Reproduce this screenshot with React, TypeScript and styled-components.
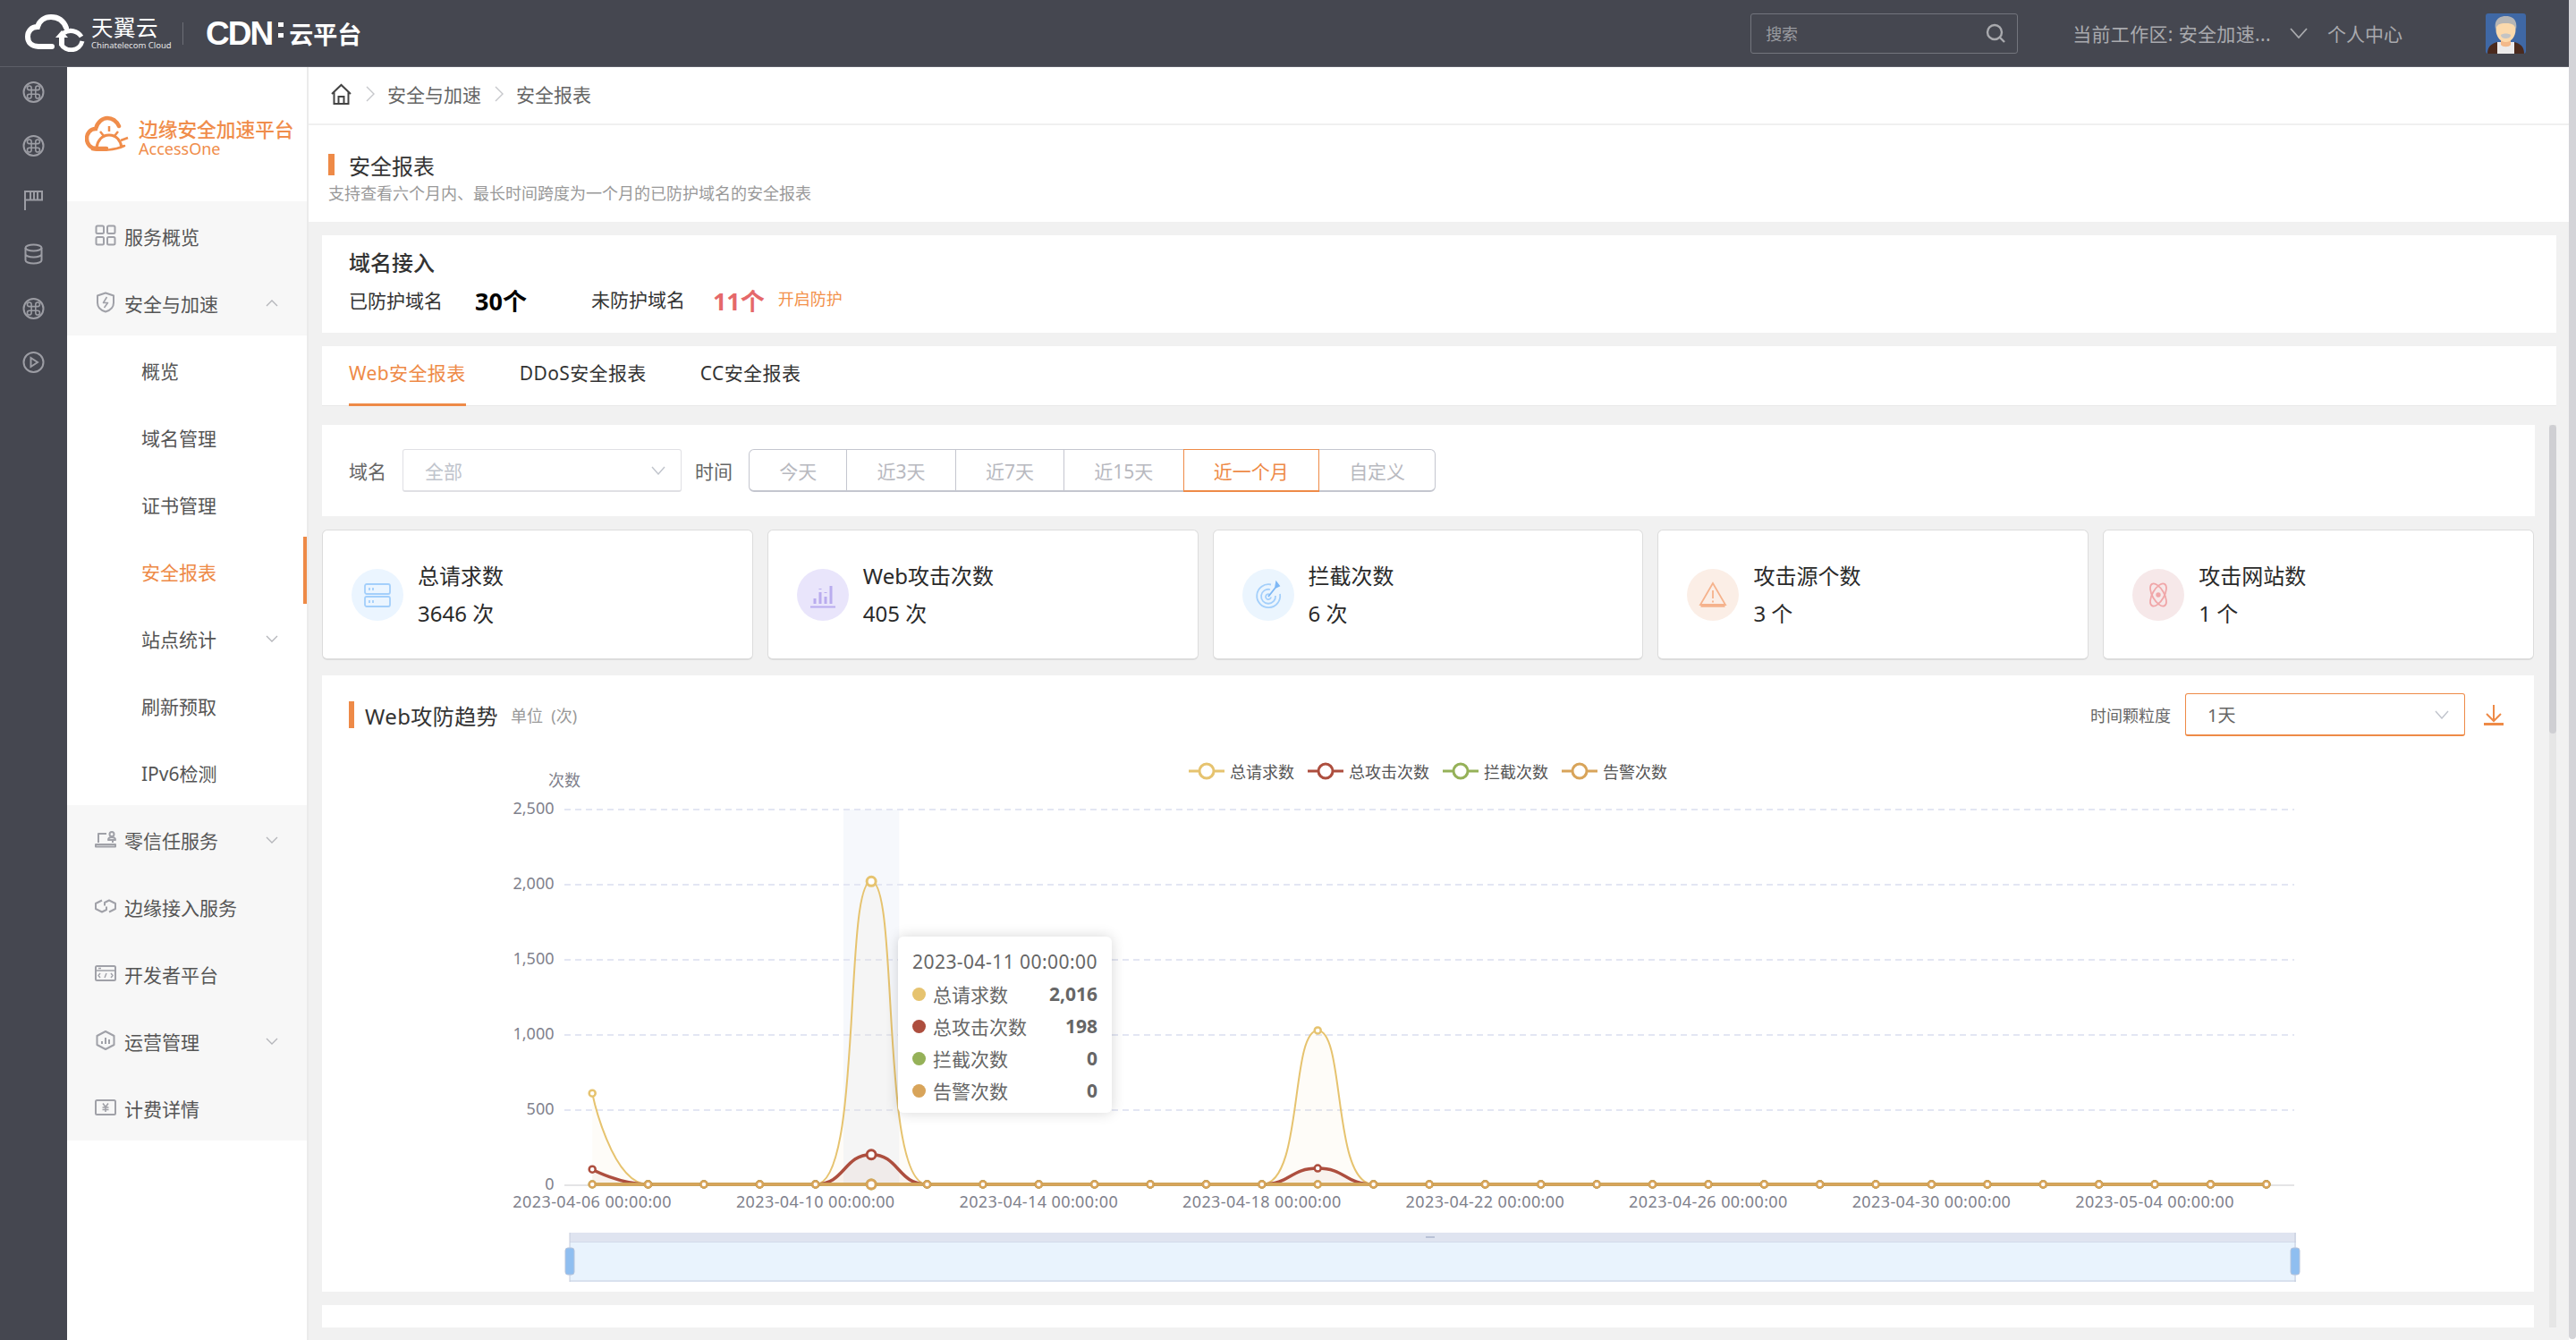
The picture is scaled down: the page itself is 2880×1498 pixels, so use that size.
import React from 'react';
import styled, { createGlobalStyle } from 'styled-components';

const GlobalStyle = createGlobalStyle`
  html, body {
    margin: 0;
    padding: 0;
    width: 2880px;
    height: 1498px;
    overflow: hidden;
    background: #fff;
    font-family: "Noto Sans", "Noto Sans CJK SC", sans-serif;
  }
  * { box-sizing: border-box; }
`;

const ORANGE = '#ee8a47';

// ---- page frame ----
const Shell = styled.div`
  display: flex;
  width: 2880px;
  height: 1498px;
  overflow: hidden;
`;

const Page = styled.div`
  flex: 1;
  min-width: 0;
  display: flex;
  flex-direction: column;
`;

const PageScrollbar = styled.div`
  width: 8px;
  height: 1497px;
  background: #d4d4d8;
  border-radius: 0 0 4px 4px;
`;

const Body = styled.div`
  flex: 1;
  min-height: 0;
  display: flex;
`;

// ---- top bar ----
const TopBar = styled.header`
  height: 75px;
  flex: none;
  display: flex;
  align-items: center;
  background: #454750;
  border-bottom: 1px solid #5c5e67;
  color: #a9aaae;
`;

const BrandCloud = styled.svg`
  width: 68px;
  height: 42px;
  margin-left: 28px;
  flex: none;
`;

const BrandText = styled.div`
  width: 76px;
  margin-left: 6px;
  display: flex;
  flex-direction: column;
  color: #fff;
`;

const BrandCn = styled.span`
  font-size: 24.5px;
  line-height: 28px;
  letter-spacing: 0.5px;
  white-space: nowrap;
`;

const BrandEn = styled.span`
  font-size: 9.5px;
  line-height: 12px;
  white-space: nowrap;
  color: #e4e4e6;
`;

const BrandDivider = styled.div`
  width: 1px;
  height: 25px;
  margin: 0 25px 0 26px;
  background: #6c6e76;
`;

const CdnMark = styled.span`
  font-family: "Liberation Sans", sans-serif;
  font-size: 37px;
  font-weight: 700;
  color: #fff;
  letter-spacing: -2px;
  line-height: 1;
`;

const CdnDots = styled.span`
  width: 6px;
  height: 17px;
  margin: 0 6px 8px 7px;
  border-top: 5px solid #fff;
  border-bottom: 5px solid #fff;
`;

const CdnName = styled.span`
  font-size: 27px;
  font-weight: 700;
  color: #fff;
`;

const SearchBox = styled.div`
  width: 299px;
  height: 45px;
  margin-left: auto;
  padding: 0 12px 0 16px;
  display: flex;
  align-items: center;
  justify-content: space-between;
  border: 1px solid #73757d;
  border-radius: 3px;
  font-size: 18px;
  color: #9a9ba0;
`;

const WorkspaceText = styled.span`
  margin-left: 61px;
  font-size: 21px;
  letter-spacing: 0.35px;
  white-space: nowrap;
`;

const WorkspaceChevron = styled.svg`
  width: 20px;
  height: 12px;
  margin-left: 21px;
  fill: none;
  stroke: #a9aaae;
  stroke-width: 1.8;
`;

const PersonalLink = styled.span`
  margin-left: 22px;
  font-size: 21px;
`;

const Avatar = styled.svg`
  width: 45px;
  height: 45px;
  margin: 0 48px 0 93px;
  flex: none;
  border-radius: 3px;
`;

// ---- left rail ----
const Rail = styled.nav`
  width: 75px;
  flex: none;
  padding-top: 16px;
  display: flex;
  flex-direction: column;
  align-items: center;
  gap: 36.4px;
  background: #454750;
  color: #9c9da4;
`;

const RailIcon = styled.svg`
  width: 25px;
  height: 24px;
  display: block;
  fill: none;
  stroke: currentColor;
  stroke-width: 2;
`;

// ---- sidebar ----
const Sidebar = styled.aside`
  width: 270px;
  flex: none;
  border-right: 2px solid #ebebeb;
  background: #fff;
`;

const SideLogo = styled.div`
  height: 150px;
  padding: 54px 0 0 20px;
  display: flex;
  gap: 7px;
`;

const SideLogoMark = styled.svg`
  width: 53px;
  height: 40px;
  flex: none;
`;

const SideLogoText = styled.div`
  display: flex;
  flex-direction: column;
  color: #f08d4b;
`;

const SideLogoName = styled.span`
  font-size: 21.7px;
  line-height: 30px;
  font-weight: 500;
  white-space: nowrap;
  margin-top: 1px;
`;

const SideLogoEn = styled.span`
  font-size: 18px;
  line-height: 20px;
  margin-top: -4px;
`;

const MenuRow = styled.div<{ $sub?: boolean; $active?: boolean }>`
  height: 75px;
  display: flex;
  align-items: center;
  gap: 9px;
  padding-left: ${p => (p.$sub ? '83px' : '31px')};
  font-size: 21px;
  color: ${p => (p.$active ? ORANGE : '#555')};
  background: ${p => (p.$sub ? '#fff' : '#f7f7f7')};
  border-right: ${p => (p.$active ? `4px solid ${ORANGE}` : 'none')};
`;

const MenuLabel = styled.span`
  position: relative;
  top: 1px;
`;

const MenuIcon = styled.svg`
  width: 24px;
  height: 24px;
  flex: none;
  fill: none;
  stroke: #a0a1a8;
  stroke-width: 2;
  stroke-linejoin: round;
`;

const MenuChevron = styled.svg`
  width: 14px;
  height: 8px;
  margin: 2px 32px 0 auto;
  flex: none;
  fill: none;
  stroke: #b4b5ba;
  stroke-width: 1.3;
`;

// ---- main column ----
const Main = styled.main`
  flex: 1;
  min-width: 0;
  display: flex;
  flex-direction: column;
  background: #f1f1f1;
`;

const Breadcrumb = styled.div`
  height: 65px;
  flex: none;
  padding: 0 0 3px 24px;
  display: flex;
  align-items: center;
  background: #fff;
  border-bottom: 2px solid #f0f0f0;
  font-size: 21px;
  color: #666;
`;

const CrumbSep = styled.svg`
  width: 10px;
  height: 18px;
  margin: 0 14px 0 15px;
  fill: none;
  stroke: #c6c7cb;
  stroke-width: 1.4;
`;

const TitleBlock = styled.div`
  height: 108px;
  flex: none;
  padding: 29px 0 0 22px;
  background: #fff;
`;

const TitleRow = styled.div`
  display: flex;
  align-items: center;
  gap: 16px;
  height: 30px;
  font-size: 24px;
  color: #333;
`;

const AccentBar = styled.span<{ $w: number; $h: number }>`
  width: ${p => p.$w}px;
  height: ${p => p.$h}px;
  flex: none;
  background: ${ORANGE};
`;

const TitleDesc = styled.div`
  margin-top: 3px;
  font-size: 18px;
  line-height: 28px;
  color: #999;
`;

const Content = styled.div`
  flex: 1;
  min-height: 0;
  padding: 15px 14px 14px 15px;
  display: flex;
  flex-direction: column;
`;

const DomainCard = styled.section`
  height: 109px;
  flex: none;
  padding: 14px 30px 0;
  background: #fff;
`;

const DomainTitle = styled.div`
  font-size: 24px;
  line-height: 34px;
  font-weight: 500;
  color: #333;
`;

const DomainRow = styled.div`
  height: 48px;
  display: flex;
  align-items: center;
  font-size: 21px;
  color: #333;
`;

const DomainCount = styled.span<{ $gap: number; $red?: boolean }>`
  margin-left: ${p => p.$gap}px;
  font-size: 27px;
  font-weight: 700;
  color: ${p => (p.$red ? '#e5686a' : '#000')};
`;

const DomainLabel = styled.span<{ $gap?: number; $raised?: boolean }>`
  margin-left: ${p => p.$gap || 0}px;
  margin-bottom: ${p => (p.$raised ? 3 : 0)}px;
`;

const EnableLink = styled.span`
  margin: 0 0 4px 15px;
  font-size: 18px;
  color: #f3914a;
`;

const TabsCard = styled.section`
  height: 67px;
  flex: none;
  margin-top: 15px;
  padding-left: 30px;
  display: flex;
  gap: 60px;
  background: #fff;
  border-bottom: 1px solid #e8e8e8;
`;

const Tab = styled.div<{ $active?: boolean }>`
  height: 67px;
  display: flex;
  align-items: center;
  padding-bottom: 6px;
  font-size: 21px;
  letter-spacing: 0.4px;
  color: ${p => (p.$active ? ORANGE : '#333')};
  border-bottom: 3px solid ${p => (p.$active ? ORANGE : 'transparent')};
`;

const ScrollPane = styled.div`
  flex: 1;
  min-height: 0;
  margin-top: 21px;
  display: flex;
  gap: 16px;
`;

const ScrollBody = styled.div`
  flex: 1;
  min-width: 0;
  overflow: hidden;
`;

const ScrollTrack = styled.div`
  width: 8px;
  flex: none;
  background: #e6e6e6;
`;

const ScrollThumb = styled.div`
  height: 345px;
  background: #cfcfd3;
  border-radius: 4px;
`;

const FilterCard = styled.section`
  height: 102px;
  padding: 0 30px;
  display: flex;
  align-items: center;
  background: #fff;
  font-size: 21px;
  color: #666;
`;

const FilterSelect = styled.div<{ $focus?: boolean; $w: number }>`
  width: ${p => p.$w}px;
  height: 48px;
  flex: none;
  display: flex;
  align-items: center;
  justify-content: space-between;
  padding: 0 17px 0 24px;
  border: 1px solid ${p => (p.$focus ? ORANGE : '#e0e0e4')};
  border-bottom-width: 2px;
  border-radius: 3px;
  color: ${p => (p.$focus ? '#666' : '#c0c4cc')};
  background: #fff;
`;

const DomainSelect = styled(FilterSelect)`
  margin: 0 15px 0 18px;
`;

const SelectChevron = styled.svg`
  width: 16px;
  height: 10px;
  fill: none;
  stroke: #c0c4cc;
  stroke-width: 1.4;
`;

const RangeGroup = styled.div`
  margin-left: 19px;
  display: flex;
`;

const RangeButton = styled.div<{ $active?: boolean }>`
  position: relative;
  z-index: ${p => (p.$active ? 1 : 0)};
  height: 48px;
  margin-left: -1px;
  padding: 0 33.2px;
  display: flex;
  align-items: center;
  border: 1px solid ${p => (p.$active ? ORANGE : '#c4c6cf')};
  border-bottom-width: 2px;
  color: ${p => (p.$active ? ORANGE : '#b8b9bf')};
  background: #fff;
  &:first-child { border-radius: 6px 0 0 6px; }
  &:last-child { border-radius: 0 6px 6px 0; }
`;

const StatRow = styled.div`
  margin: 15px 1px 0 0;
  display: grid;
  grid-template-columns: repeat(5, 1fr);
  gap: 16px;
`;

const StatCard = styled.div`
  height: 146px;
  padding: 1px 0 0 32px;
  display: flex;
  align-items: center;
  gap: 16px;
  background: #fff;
  border: 1px solid #dcdcdc;
  border-bottom-width: 2px;
  border-radius: 6px;
`;

const StatBadge = styled.div<{ $bg: string }>`
  width: 58px;
  height: 58px;
  flex: none;
  border-radius: 50%;
  display: flex;
  align-items: center;
  justify-content: center;
  background: ${p => p.$bg};
`;

const StatIcon = styled.svg`
  width: 32px;
  height: 32px;
  fill: none;
  stroke-width: 1.8;
`;

const StatText = styled.div`
  display: flex;
  flex-direction: column;
  font-size: 24px;
  line-height: 42px;
  color: #2a2a2a;
`;

// ---- chart ----
const ChartCard = styled.section`
  height: 689px;
  margin: 17px 1px 0 0;
  background: #fff;
`;

const ChartHeader = styled.div`
  height: 90px;
  padding: 20px 34px 22px 30px;
  display: flex;
  align-items: center;
`;

const ChartTitle = styled.span`
  margin-left: 12px;
  font-size: 24px;
  letter-spacing: 0.4px;
  color: #333;
`;

const ChartUnit = styled.span`
  margin-left: 14px;
  font-size: 18px;
  color: #999;
  white-space: pre;
`;

const GrainLabel = styled.span`
  margin: 0 16px 0 auto;
  font-size: 18px;
  color: #666;
`;

const GrainSelect = styled(FilterSelect)`
  font-size: 20px;
`;

const DownloadIcon = styled.svg`
  width: 22px;
  height: 24px;
  margin-left: 21px;
  flex: none;
  fill: none;
  stroke: ${ORANGE};
  stroke-width: 2;
`;

const ChartBody = styled.div`
  position: relative;
  height: 595px;
`;

const ChartSvg = styled.svg`
  display: block;
  width: 2474px;
  height: 595px;
  font-family: "Noto Sans", "Noto Sans CJK SC", sans-serif;
`;

const Legend = styled.div`
  position: absolute;
  top: -1px;
  left: 0;
  right: 0;
  height: 36px;
  display: flex;
  justify-content: center;
  align-items: center;
  gap: 15px;
  font-size: 18px;
  color: #555;
`;

const LegendItem = styled.div`
  display: flex;
  align-items: center;
  gap: 6px;
`;

const LegendMark = styled.svg`
  width: 40px;
  height: 20px;
`;

const Tooltip = styled.div`
  position: absolute;
  left: 644px;
  top: 202px;
  width: 239px;
  height: 197px;
  padding: 10px 16px;
  background: #fff;
  border-radius: 6px;
  box-shadow: 0 0 15px rgba(0, 0, 0, 0.16);
  font-size: 21px;
  color: #666;
`;

const TooltipDate = styled.div`
  height: 36px;
  line-height: 36px;
  white-space: nowrap;
  letter-spacing: 0.45px;
`;

const TooltipRow = styled.div`
  height: 36px;
  display: flex;
  align-items: center;
`;

const TooltipDot = styled.span<{ $color: string }>`
  width: 15px;
  height: 15px;
  margin-right: 8px;
  border-radius: 50%;
  background: ${p => p.$color};
`;

const TooltipValue = styled.b`
  margin-left: auto;
  font-weight: 700;
`;

const NextCard = styled.section`
  height: 40px;
  margin: 15px 1px 0 0;
  background: #fff;
`;

// ---- data ----
const SERIES = [
  { name: '总请求数', color: '#e6c36f', width: 2, fill: 0.05, values: { 0: 606, 5: 2016, 13: 1024 } as Record<number, number> },
  { name: '总攻击次数', color: '#ad4e3e', width: 3.5, fill: 0.06, values: { 0: 100, 5: 198, 13: 107 } as Record<number, number> },
  { name: '拦截次数', color: '#95b158', width: 3.5, fill: 0, values: {} as Record<number, number> },
  { name: '告警次数', color: '#d8a45a', width: 3.5, fill: 0, values: {} as Record<number, number> },
];

const TOOLTIP_VALUES = ['2,016', '198', '0', '0'];

const X0 = 631;
const X1 = 2565;
const Y0 = 1325;
const STEP = (X1 - X0) / 31;
const UNIT = 84 / 500;
const px = (i: number) => X0 + STEP * (i + 0.5);
const py = (v: number) => Y0 - 1 - v * UNIT;

const clamp = (v: number, a: number, b: number) => Math.max(Math.min(v, Math.max(a, b)), Math.min(a, b));

// same bezier rule as echarts line with smooth: true
function smoothPath(points: number[][]) {
  const smooth = 0.5;
  let d = `M${points[0][0]} ${points[0][1]}`;
  let cx = points[0][0];
  let cy = points[0][1];
  for (let i = 1; i < points.length; i++) {
    const [x, y] = points[i];
    const [ax, ay] = points[i - 1];
    if (i === points.length - 1) {
      d += `C${cx} ${cy} ${x} ${y} ${x} ${y}`;
      break;
    }
    const [bx, by] = points[i + 1];
    const lenPrev = Math.hypot(x - ax, y - ay);
    const lenNext = Math.hypot(bx - x, by - y);
    const ratio = lenNext / (lenNext + lenPrev);
    const nx = clamp(x + (bx - ax) * smooth * ratio, bx, x);
    const ny = clamp(y + (by - ay) * smooth * ratio, by, y);
    const c1x = clamp(x - ((nx - x) * lenPrev) / lenNext, ax, x);
    const c1y = clamp(y - ((ny - y) * lenPrev) / lenNext, ay, y);
    d += `C${cx} ${cy} ${c1x} ${c1y} ${x} ${y}`;
    cx = x + ((x - c1x) * lenNext) / lenPrev;
    cy = y + ((y - c1y) * lenNext) / lenPrev;
  }
  return d;
}

const seriesPoints = (values: Record<number, number>) =>
  Array.from({ length: 31 }, (_, i) => [px(i), py(values[i] || 0)]);

const xLabels = ['04-06', '04-10', '04-14', '04-18', '04-22', '04-26', '04-30', '05-04'];
const yLabels = ['0', '500', '1,000', '1,500', '2,000', '2,500'];

const TrendChart = () => (
  <ChartSvg viewBox="360 845 2474 595">
    <rect x={X0 + STEP * 5} y={905} width={STEP} height={420} fill="#f6f8fc" />
    {yLabels.map((t, i) => (
      <g key={t}>
        {i > 0 && (
          <line x1={X0} x2={X1} y1={Y0 - i * 84} y2={Y0 - i * 84} stroke="#e3e6f3" strokeWidth="2" strokeDasharray="7 5" />
        )}
        <text x={619.5} y={Y0 - i * 84 + 5} textAnchor="end" fontSize="18" fill="#7f818c">{t}</text>
      </g>
    ))}
    <line x1={X0} x2={X1} y1={Y0} y2={Y0} stroke="#e4e4e6" strokeWidth="2" />
    <text x={631} y={879} textAnchor="middle" fontSize="18" fill="#7f818c">次数</text>
    {xLabels.map((t, i) => (
      <text key={t} x={px(i * 4)} y={1350} textAnchor="middle" fontSize="18" letterSpacing="0.4" fill="#7f818c">{`2023-${t} 00:00:00`}</text>
    ))}
    {SERIES.filter(s => s.fill > 0).map(s => (
      <path key={s.name} d={`${smoothPath(seriesPoints(s.values))}L${px(30)} ${Y0}L${px(0)} ${Y0}Z`} fill={s.color} fillOpacity={s.fill} />
    ))}
    {SERIES.map(s => (
      <path key={s.name} d={smoothPath(seriesPoints(s.values))} fill="none" stroke={s.color} strokeWidth={s.width} />
    ))}
    {SERIES.map(s =>
      seriesPoints(s.values).map(([x, y], i) => (
        <circle key={s.name + i} cx={x} cy={y} r={i === 5 ? 5 : 3.5} fill="#fff" stroke={s.color} strokeWidth={i === 5 ? 3 : 2.5} />
      ))
    )}
    <rect x={637} y={1378} width={1930} height={55} fill="#e9f3fd" />
    <rect x={637} y={1378} width={1930} height={10} fill="#dfe4f0" />
    <line x1={637} x2={2567} y1={1388.5} y2={1388.5} stroke="#d3daea" />
    <line x1={637} x2={2567} y1={1432} y2={1432} stroke="#d9e1ee" strokeWidth="2" />
    <line x1={637} x2={637} y1={1378} y2={1433} stroke="#c4cbdb" />
    <line x1={2566} x2={2566} y1={1378} y2={1433} stroke="#c4cbdb" />
    <rect x={632} y={1395} width={10} height={30} rx={3} fill="#8fbef0" stroke="#b6c4dc" />
    <rect x={2561} y={1395} width={10} height={30} rx={3} fill="#8fbef0" stroke="#b6c4dc" />
    <rect x={1594} y={1382} width={10} height={2} fill="#b9c2d6" />
  </ChartSvg>
);

const RAIL = ['cmd', 'cmd', 'flag', 'db', 'cmd', 'play'];

const RailGlyph = ({ kind }: { kind: string }) => (
  <RailIcon viewBox="0 0 25 24">
    {kind === 'cmd' && (
      <>
        <circle cx="12.5" cy="12" r="11" />
        <path transform="translate(3.1 2.6) scale(0.78)" d="M15 6v12a3 3 0 1 0 3-3H6a3 3 0 1 0 3 3V6a3 3 0 1 0-3 3h12a3 3 0 1 0-3-3" />
      </>
    )}
    {kind === 'flag' && (
      <path d="M3 23V2h19v9.5H3M9 3v8M13 3v8M17 3v8" />
    )}
    {kind === 'db' && (
      <>
        <ellipse cx="12.5" cy="5" rx="9" ry="3.6" />
        <path d="M3.5 5v14c0 2 4 3.6 9 3.6s9-1.6 9-3.6V5M3.5 12c0 2 4 3.6 9 3.6s9-1.6 9-3.6" />
      </>
    )}
    {kind === 'play' && (
      <>
        <circle cx="12.5" cy="12" r="11" />
        <path d="M9.5 7v10l7.5-5z" />
      </>
    )}
  </RailIcon>
);

const MENU_ICONS: Record<string, React.ReactNode> = {
  grid: (
    <>
      <rect x="1.5" y="1.5" width="8.5" height="8.5" rx="1.5" />
      <rect x="14" y="1.5" width="8.5" height="8.5" rx="1.5" />
      <rect x="1.5" y="14" width="8.5" height="8.5" rx="1.5" />
      <rect x="14" y="14" width="8.5" height="8.5" rx="1.5" />
    </>
  ),
  shield: (
    <>
      <path d="M12 1.5l9 3v8c0 5-4 8.5-9 10-5-1.5-9-5-9-10v-8z" />
      <path d="M13.5 6l-4 6.5h5l-4 5.5" strokeWidth="1.6" />
    </>
  ),
  laptop: (
    <>
      <path d="M4 16V6h9M1 18h22v2.5H1zM20 13v3" />
      <circle cx="19" cy="6.5" r="2.5" />
      <path d="M15 13c0-2 2-3 4-3s4 1 4 3z" />
    </>
  ),
  link: (
    <>
      <path d="M8 5.5L1 9v6l7 3.5 5-2.5v-3.5" />
      <path d="M16 18.5l7-3.5V9l-7-3.5-5 2.5v3.5" />
    </>
  ),
  window: (
    <>
      <rect x="1" y="4" width="22" height="16" rx="1.5" />
      <path d="M1 9h22M4 6.5h3M6 12l-2 2.5L6 17M18 12l2 2.5-2 2.5M13 12l-2 5" strokeWidth="1.4" />
    </>
  ),
  hexbars: (
    <>
      <path d="M12 2l9.5 5v10L12 22l-9.5-5V7z" />
      <path d="M8 16v-3M12 16V9M16 16v-5" />
    </>
  ),
  yuan: (
    <>
      <rect x="1" y="4" width="22" height="16" rx="1.5" />
      <path d="M9 7.5l3 4 3-4M12 11.5V17M8.5 12h7M8.5 14.5h7" strokeWidth="1.6" />
    </>
  ),
};

const Down = () => (
  <MenuChevron viewBox="0 0 14 8"><path d="M1 1l6 6 6-6" /></MenuChevron>
);

const Up = () => (
  <MenuChevron viewBox="0 0 14 8"><path d="M1 7l6-6 6 6" /></MenuChevron>
);

const STAT_CARDS: { title: string; value: string; bg: string; stroke: string; icon: React.ReactNode }[] = [
  {
    title: '总请求数', value: '3646 次', bg: '#ebf5ff', stroke: '#a3cffb',
    icon: (
      <>
        <rect x="2" y="4" width="28" height="11" rx="2" />
        <rect x="2" y="18" width="28" height="11" rx="2" />
        <path d="M7 8v3M11 8v3M7 22v3M11 22v3" />
      </>
    ),
  },
  {
    title: 'Web攻击次数', value: '405 次', bg: '#e9e5fb', stroke: '#b9acee',
    icon: (
      <g strokeWidth="3">
        <path d="M2 29.5h28" strokeWidth="2" />
        <path d="M7 26v-6M13 26V13M19 26v-8M25 26V6" />
        <path d="M13 9v1M19 13v1" />
      </g>
    ),
  },
  {
    title: '拦截次数', value: '6 次', bg: '#ebf5fe', stroke: '#a3cffb',
    icon: (
      <>
        <path d="M19 4.5A13 13 0 1 0 29 15" />
        <path d="M18 10a8 8 0 1 0 6 7" />
        <path d="M17.5 15.5a3 3 0 1 0 1.5 3" />
        <path d="M16 18L27 4M24 8l1-6 3 4z" stroke="#7db7f5" />
      </>
    ),
  },
  {
    title: '攻击源个数', value: '3 个', bg: '#fbeee6', stroke: '#f5b28c',
    icon: (
      <>
        <path d="M16 3L2 27h28z" />
        <path d="M2.5 28.5h27" strokeWidth="2.5" />
        <path d="M16 11v9M16 22.5v2" />
      </>
    ),
  },
  {
    title: '攻击网站数', value: '1 个', bg: '#f6e8e9', stroke: '#f0a6a8',
    icon: (
      <>
        <ellipse cx="16" cy="16" rx="14" ry="6.5" transform="rotate(60 16 16)" />
        <ellipse cx="16" cy="16" rx="14" ry="6.5" transform="rotate(-60 16 16)" />
        <circle cx="16" cy="16" r="1.8" fill="#f0a6a8" />
      </>
    ),
  },
];

const RANGES = ['今天', '近3天', '近7天', '近15天', '近一个月', '自定义'];
const TABS = ['Web安全报表', 'DDoS安全报表', 'CC安全报表'];
const SUB_ITEMS = ['概览', '域名管理', '证书管理', '安全报表', '站点统计', '刷新预取', 'IPv6检测'];
const LOWER_ITEMS = [
  { label: '零信任服务', icon: 'laptop', more: true },
  { label: '边缘接入服务', icon: 'link' },
  { label: '开发者平台', icon: 'window' },
  { label: '运营管理', icon: 'hexbars', more: true },
  { label: '计费详情', icon: 'yuan' },
];

export default function App() {
  return (
    <>
      <GlobalStyle />
      <Shell>
        <Page>
          <TopBar>
            <BrandCloud viewBox="0 0 68 42">
              <path
                d="M30 36H15C7 36 3 31 3 25c0-6 4-11 11-11C16 7 22 3 29 3c8 0 14 4 17 12"
                fill="none" stroke="#fff" strokeWidth="6" strokeLinecap="round"
              />
              <path d="M43 21a14 14 0 0 1 20 4" fill="none" stroke="#fff" strokeWidth="5" />
              <path d="M64 30a13 13 0 0 1-24 3" fill="none" stroke="#fff" strokeWidth="5" />
              <path d="M34 26l7-8 7 8h-4v9h-6v-9z" fill="#fff" />
            </BrandCloud>
            <BrandText>
              <BrandCn>天翼云</BrandCn>
              <BrandEn>Chinatelecom Cloud</BrandEn>
            </BrandText>
            <BrandDivider />
            <CdnMark>CDN</CdnMark>
            <CdnDots />
            <CdnName>云平台</CdnName>
            <SearchBox>
              搜索
              <svg width="24" height="24" viewBox="0 0 24 24" fill="none" stroke="#a9aaae" strokeWidth="2.4">
                <circle cx="11" cy="11" r="8" />
                <path d="M17 17l5 5" />
              </svg>
            </SearchBox>
            <WorkspaceText>当前工作区: 安全加速...</WorkspaceText>
            <WorkspaceChevron viewBox="0 0 20 12"><path d="M1 1l9 10 9-10" /></WorkspaceChevron>
            <PersonalLink>个人中心</PersonalLink>
            <Avatar viewBox="0 0 45 45">
              <rect width="45" height="45" fill="#3f68a5" />
              <path d="M2 45c0-8 4-11 11-13h19c7 2 11 5 11 13z" fill="#4a2a1e" />
              <path d="M13 45V32h19v13z" fill="#eceaea" />
              <path d="M17 30h11v5c-2 3-9 3-11 0z" fill="#f3b98a" />
              <ellipse cx="22.5" cy="18" rx="11" ry="14" fill="#fbd9ac" />
              <path d="M11 18C9 6 16 3 22.5 3S36 6 34 18c-2-5-3-7-11.5-7S13 13 11 18z" fill="#b5b5b5" />
              <path d="M17 24c3-2 8-2 11 0 0 3-3 4-5.5 4S17 27 17 24z" fill="#c4c4c4" />
            </Avatar>
          </TopBar>
          <Body>
            <Rail>
              {RAIL.map((k, i) => <RailGlyph key={i} kind={k} />)}
            </Rail>
            <Sidebar>
              <SideLogo>
                <SideLogoMark viewBox="0 0 53 40" fill="none" stroke="#f08d4b">
                  <path d="M24 37H13C6 37 2 32 2 26s4-11 10-11C14 7 20 3 25 3c6 0 10 3 13 9" strokeWidth="4.5" strokeLinecap="round" />
                  <path d="M13 36c1-8 6-14 14-14s13 6 14 14" strokeWidth="3" />
                  <path d="M27 12v6M17 18l4 5M37 18l-4 5M40 28l8-3" strokeWidth="2.5" />
                  <path d="M8 38c10 2 25 1 36-4" strokeWidth="2.5" strokeLinecap="round" />
                </SideLogoMark>
                <SideLogoText>
                  <SideLogoName>边缘安全加速平台</SideLogoName>
                  <SideLogoEn>AccessOne</SideLogoEn>
                </SideLogoText>
              </SideLogo>
              <MenuRow>
                <MenuIcon viewBox="0 0 24 24">{MENU_ICONS.grid}</MenuIcon>
                <MenuLabel>服务概览</MenuLabel>
              </MenuRow>
              <MenuRow>
                <MenuIcon viewBox="0 0 24 24">{MENU_ICONS.shield}</MenuIcon>
                <MenuLabel>安全与加速</MenuLabel>
                <Up />
              </MenuRow>
              {SUB_ITEMS.map(label => (
                <MenuRow key={label} $sub $active={label === '安全报表'}>
                  <MenuLabel>{label}</MenuLabel>
                  {label === '站点统计' && <Down />}
                </MenuRow>
              ))}
              {LOWER_ITEMS.map(item => (
                <MenuRow key={item.label}>
                  <MenuIcon viewBox="0 0 24 24">{MENU_ICONS[item.icon]}</MenuIcon>
                  <MenuLabel>{item.label}</MenuLabel>
                  {item.more && <Down />}
                </MenuRow>
              ))}
            </Sidebar>
            <Main>
              <Breadcrumb>
                <svg width="25" height="25" viewBox="0 0 25 25" fill="none" stroke="#444" strokeWidth="2">
                  <path d="M2 12L12.5 2 23 12M4.5 10v13h16V10M9.5 23v-8h6v8" />
                </svg>
                <CrumbSep viewBox="0 0 10 18"><path d="M1 1l8 8-8 8" /></CrumbSep>
                安全与加速
                <CrumbSep viewBox="0 0 10 18"><path d="M1 1l8 8-8 8" /></CrumbSep>
                安全报表
              </Breadcrumb>
              <TitleBlock>
                <TitleRow>
                  <AccentBar $w={7} $h={24} />
                  安全报表
                </TitleRow>
                <TitleDesc>支持查看六个月内、最长时间跨度为一个月的已防护域名的安全报表</TitleDesc>
              </TitleBlock>
              <Content>
                <DomainCard>
                  <DomainTitle>域名接入</DomainTitle>
                  <DomainRow>
                    <DomainLabel>已防护域名</DomainLabel>
                    <DomainCount $gap={36}>30个</DomainCount>
                    <DomainLabel $gap={72} $raised>未防护域名</DomainLabel>
                    <DomainCount $gap={31} $red>11个</DomainCount>
                    <EnableLink>开启防护</EnableLink>
                  </DomainRow>
                </DomainCard>
                <TabsCard>
                  {TABS.map((t, i) => <Tab key={t} $active={i === 0}>{t}</Tab>)}
                </TabsCard>
                <ScrollPane>
                  <ScrollBody>
                    <FilterCard>
                      域名
                      <DomainSelect $w={312}>
                        全部
                        <SelectChevron viewBox="0 0 16 10"><path d="M1 1l7 8 7-8" /></SelectChevron>
                      </DomainSelect>
                      时间
                      <RangeGroup>
                        {RANGES.map(r => <RangeButton key={r} $active={r === '近一个月'}>{r}</RangeButton>)}
                      </RangeGroup>
                    </FilterCard>
                    <StatRow>
                      {STAT_CARDS.map(c => (
                        <StatCard key={c.title}>
                          <StatBadge $bg={c.bg}>
                            <StatIcon viewBox="0 0 32 32" stroke={c.stroke}>{c.icon}</StatIcon>
                          </StatBadge>
                          <StatText>
                            <span>{c.title}</span>
                            <span>{c.value}</span>
                          </StatText>
                        </StatCard>
                      ))}
                    </StatRow>
                    <ChartCard>
                      <ChartHeader>
                        <AccentBar $w={6} $h={30} />
                        <ChartTitle>Web攻防趋势</ChartTitle>
                        <ChartUnit>单位  (次)</ChartUnit>
                        <GrainLabel>时间颗粒度</GrainLabel>
                        <GrainSelect $w={313} $focus>
                          1天
                          <SelectChevron viewBox="0 0 16 10"><path d="M1 1l7 8 7-8" /></SelectChevron>
                        </GrainSelect>
                        <DownloadIcon viewBox="0 0 22 24">
                          <path d="M11 1v17M3 11l8 8 8-8" />
                          <path d="M0 22.5h22" strokeWidth="3" />
                        </DownloadIcon>
                      </ChartHeader>
                      <ChartBody>
                        <TrendChart />
                        <Legend>
                          {SERIES.map(s => (
                            <LegendItem key={s.name}>
                              <LegendMark viewBox="0 0 40 20">
                                <path d="M0 10h40" stroke={s.color} strokeWidth="3" />
                                <circle cx="20" cy="10" r="8" fill="#fff" stroke={s.color} strokeWidth="3" />
                              </LegendMark>
                              {s.name}
                            </LegendItem>
                          ))}
                        </Legend>
                        <Tooltip>
                          <TooltipDate>2023-04-11 00:00:00</TooltipDate>
                          {SERIES.map((s, i) => (
                            <TooltipRow key={s.name}>
                              <TooltipDot $color={s.color} />
                              {s.name}
                              <TooltipValue>{TOOLTIP_VALUES[i]}</TooltipValue>
                            </TooltipRow>
                          ))}
                        </Tooltip>
                      </ChartBody>
                    </ChartCard>
                    <NextCard />
                  </ScrollBody>
                  <ScrollTrack><ScrollThumb /></ScrollTrack>
                </ScrollPane>
              </Content>
            </Main>
          </Body>
        </Page>
        <PageScrollbar />
      </Shell>
    </>
  );
}
